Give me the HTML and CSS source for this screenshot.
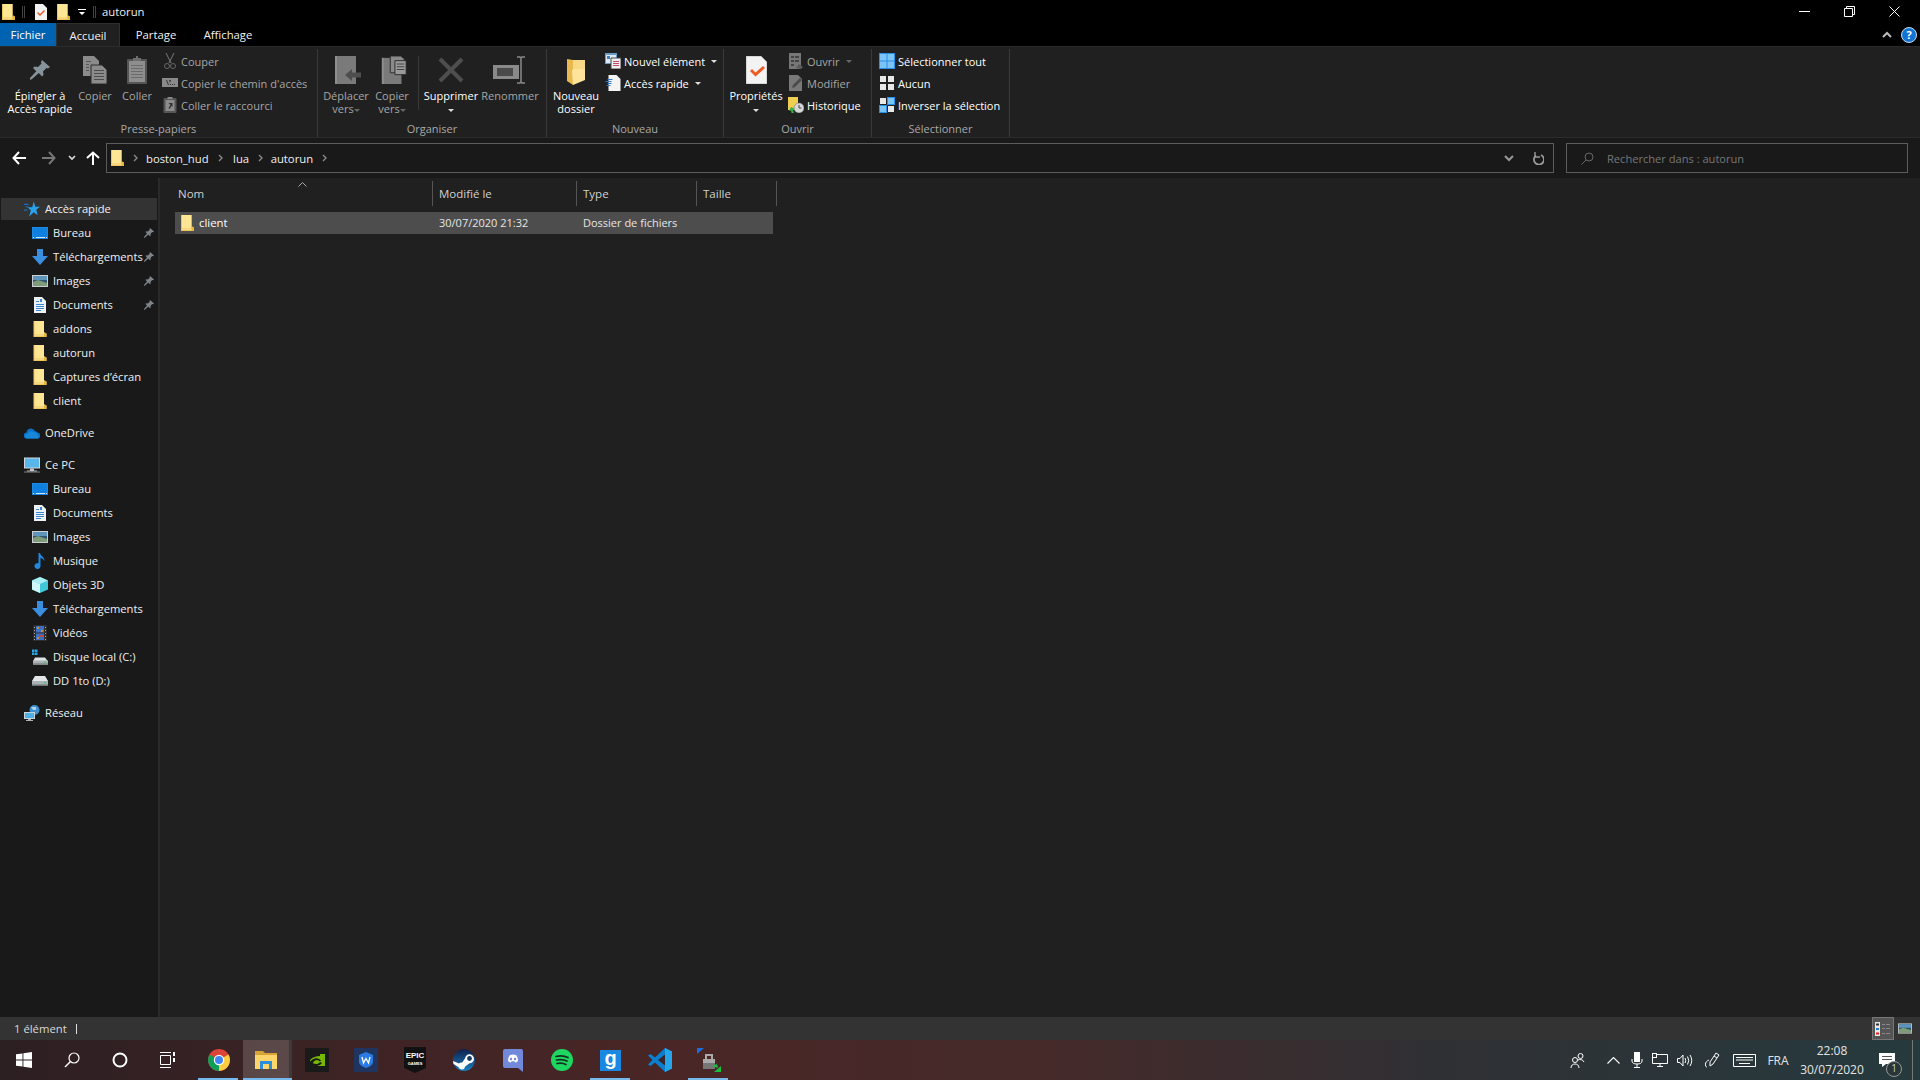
FILE: index.html
```html
<!DOCTYPE html>
<html lang="fr">
<head>
<meta charset="utf-8">
<title>autorun</title>
<link rel="stylesheet" href="styles.css">
</head>
<body>
<svg class="defs" width="0" height="0">
  <defs>
    <symbol id="folder" viewBox="0 0 13 16">
      <path d="M0 0h10.5v12.5H13V16H0z" fill="#eec55a"/>
      <path d="M1 0h9.5v13.5H1z" fill="#ffe695"/>
      <path d="M10.5 11l2.500 1.500V16h-2.500z" fill="#e5b640"/>
      <path d="M1 14.500h9.500V15H1z" fill="#ffefb8"/>
    </symbol>
    <symbol id="pin" viewBox="0 0 20 20">
      <path d="M12 0l8 7-2 1.500-1.500-.5-3.500 3.500.5 3.500-1.500 1.500-3.200-3.500L2 19l-2 1 0-2 6.300-6.800L3 8l1.500-1.500 3.500.5 3.500-3.500-.5-1.500z" fill="#87939b"/>
    </symbol>
    <symbol id="spin" viewBox="0 0 10 10">
      <path d="M6 0l4 3.500-1 .7-.7-.2-1.800 1.800.2 1.700-.7.8L4.400 6.500 1 9.600 0 10V9l3.100-3.400L1.500 4l.7-.7 1.700.2L5.700 1.700 5.500 1z" fill="#7f868b"/>
    </symbol>
    <symbol id="desktop" viewBox="0 0 16 12">
      <path d="M0 0h16v12H0z" fill="#1a8ae6"/>
      <path d="M1 1h14v9H1z" fill="#0f7fe0"/>
      <path d="M1 10h1v1H1zM4 10h9v1H4zM14 10h1v1h-1z" fill="#cfe6fb"/>
    </symbol>
    <symbol id="download" viewBox="0 0 16 16">
      <path d="M5 0h6v7h5l-8 9-8-9h5z" fill="#3a8ee0"/>
    </symbol>
    <symbol id="images" viewBox="0 0 16 12">
      <path d="M0 0h16v12H0z" fill="#c9ced2"/>
      <path d="M1 1h14v10H1z" fill="#31566f"/>
      <path d="M1 1h14v4H1z" fill="#5d95bd"/>
      <path d="M1 7l5-2 9 3v3H1z" fill="#7e9c78"/>
    </symbol>
    <symbol id="doc" viewBox="0 0 12 16">
      <path d="M0 0h8l4 4v12H0z" fill="#eef2f6"/>
      <path d="M2 4h3v1H2zM6 2h2v3H6zM2 7h8v1H2zM2 9h8v1H2zM2 11h8v1H2zM2 13h5v1H2z" fill="#3a86d0"/>
    </symbol>
    <symbol id="star" viewBox="0 0 14 13">
      <path d="M8.500 0l1.400 4.500H14l-3.300 2.700L12 12 8.500 9.300 4.500 13 6 7.500 3 5h4.200z" fill="#2aa3ee"/>
      <path d="M0 2h4v1H0zM1 4h3v1H1zM0 7h3v1H0z" fill="#1a6cc0"/>
    </symbol>
    <symbol id="onedrive" viewBox="0 0 16 11">
      <path d="M3 11a3 3 0 0 1-.5-6 4.500 4.500 0 0 1 8.500-1.500A3.500 3.500 0 0 1 13.500 5 3 3 0 0 1 13 11z" fill="#0a6fc4"/>
      <path d="M2.500 11a2.500 2.500 0 0 1 1-4.800 4 4 0 0 1 6.500-1.400 3 3 0 0 1 3.700 2.600 2 2 0 0 1 0 3.600z" fill="#1687d9"/>
    </symbol>
    <symbol id="pc" viewBox="0 0 16 15">
      <path d="M0 0h16v11H0z" fill="#d0d8de"/>
      <path d="M1 1h14v9H1z" fill="#58b7ea"/>
      <path d="M6 11h4v2H6zM3 13h10v1H3z" fill="#c0c6cb"/>
      <path d="M0 14h16v1H0z" fill="#7e858a"/>
    </symbol>
    <symbol id="music" viewBox="0 0 11 16">
      <path d="M4 0h1.500c.5 3 4.500 3.500 4.500 8-1-2-3-3-4-3v8a3 3 0 1 1-2-2.800z" fill="#2088e0"/>
    </symbol>
    <symbol id="cube" viewBox="0 0 16 16">
      <path d="M8 0l8 3.500v9L8 16 0 12.500v-9z" fill="#40c8d8"/>
      <path d="M8 0l8 3.500L8 7 0 3.500z" fill="#a8eef2"/>
      <path d="M0 3.500L8 7v9l-8-3.500z" fill="#d0f5f5"/>
    </symbol>
    <symbol id="video" viewBox="0 0 14 16">
      <path d="M0 0h14v16H0z" fill="#2d2d2d"/>
      <path d="M3 1h8v6.500H3z" fill="#3f6fc0"/>
      <path d="M3 8.500h8V15H3z" fill="#3f6fc0"/>
      <path d="M4 2h2v2H4zM8 5h2v2H8zM4 12h2v2H4z" fill="#c98a3d"/>
      <path d="M7 10h3v2H7z" fill="#b94a4a"/>
      <path d="M1 2h1v1H1zM1 5h1v1H1zM1 8h1v1H1zM1 11h1v1H1zM1 14h1v1H1zM12 2h1v1h-1zM12 5h1v1h-1zM12 8h1v1h-1zM12 11h1v1h-1zM12 14h1v1h-1z" fill="#aaa"/>
    </symbol>
    <symbol id="diskc" viewBox="0 0 16 15">
      <path d="M0 0h2.500v2.500H0zM3 0h2.500v2.500H3zM0 3h2.500v2.500H0zM3 3h2.500v2.500H3z" fill="#28a8ea"/>
      <path d="M3 8h10l3 4v3H1v-3z" fill="#dfe3e5"/>
      <path d="M1 11h15v4H1z" fill="#aab0b4"/>
      <path d="M1 14h15v1H1z" fill="#6c7276"/>
      <path d="M12 12h2v1.500h-2z" fill="#3cd070"/>
    </symbol>
    <symbol id="diskd" viewBox="0 0 16 10">
      <path d="M3 0h10l3 5v5H0V5z" fill="#e4e7e9"/>
      <path d="M0 5h16v5H0z" fill="#aab0b4"/>
      <path d="M0 8.500h16V10H0z" fill="#6c7276"/>
      <path d="M12 6h2v1.500h-2z" fill="#3cd070"/>
    </symbol>
    <symbol id="network" viewBox="0 0 16 16">
      <circle cx="10.500" cy="5" r="5" fill="#3d8fd0"/>
      <path d="M7 2h5v3H9z" fill="#a8d4ee"/>
      <path d="M0 7h11v7H0z" fill="#c9d3da"/>
      <path d="M1 8h9v5H1z" fill="#4fb0e6"/>
      <path d="M4 14h3v1h2v1H2v-1h2z" fill="#aab2b8"/>
    </symbol>

    <symbol id="copy-l" viewBox="0 0 24 28">
      <path d="M0 0h11l5 5v15H0z" fill="#8b8b8b"/>
      <path d="M8 9h11l5 5v14H8z" fill="#8b8b8b" stroke="#2d2d2d"/>
      <path d="M11 14h10v1H11zM11 17h10v1H11zM11 20h10v1H11zM11 23h10v1H11z" fill="#4c4c4c"/>
      <path d="M3 5h5v1H3zM3 8h3v1H3zM3 11h3v1H3zM3 14h3v1H3z" fill="#555"/>
    </symbol>
    <symbol id="paste-l" viewBox="0 0 20 28">
      <path d="M1 3h18q1 0 1 1v23q0 1-1 1H1q-1 0-1-1V4q0-1 1-1z" fill="#555"/>
      <path d="M6 2h3V0h2v2h3v3H6z" fill="#6e6e6e"/>
      <path d="M2 5h16v21H2z" fill="#8e8e8e"/>
      <path d="M4 9h12v1H4zM4 12h12v1H4zM4 15h12v1H4zM4 18h12v1H4zM4 21h12v1H4z" fill="#6b6b6b"/>
    </symbol>
    <symbol id="scissors" viewBox="0 0 12 16">
      <path d="M2 0l5 10M10 0L5 10" stroke="#777" fill="none"/>
      <circle cx="3" cy="13" r="2.500" stroke="#666" fill="none"/>
      <circle cx="9" cy="13" r="2.500" stroke="#666" fill="none"/>
    </symbol>
    <symbol id="pathi" viewBox="0 0 16 10">
      <path d="M0 0h16v9H0z" fill="#8a8a8a"/>
      <path d="M4 2l2 5h1L5 2zM8 6h1v1H8zM10 6h1v1h-1zM12 6h1v1h-1zM7 2l1 3 1-3z" fill="#333"/>
    </symbol>
    <symbol id="pastesm" viewBox="0 0 13 16">
      <path d="M1 1h11q1 0 1 1v13q0 1-1 1H1q-1 0-1-1V2q0-1 1-1z" fill="#555"/>
      <path d="M4 0h5v2H4z" fill="#888"/>
      <path d="M2 3h9v11H2z" fill="#8c8c8c"/>
      <path d="M5 6h4v4L8 9l-2 3-1-1 2-3z" fill="#333"/>
    </symbol>
    <symbol id="move-l" viewBox="0 0 26 28">
      <path d="M0 0h21v28H0z" fill="#7a7a7a"/>
      <path d="M0 0h2v28H0z" fill="#8e8e8e"/>
      <path d="M10 19l7-6v3.500h9v5h-9V25z" fill="#4e4e4e"/>
    </symbol>
    <symbol id="copyto-l" viewBox="0 0 26 30">
      <path d="M0 2h21v28H0z" fill="#7a7a7a"/>
      <path d="M0 2h2v28H0z" fill="#8e8e8e"/>
      <path d="M9 0h11l4 3v15H9z" fill="#8a8a8a" stroke="#2a2a2a"/>
      <path d="M14 5h12v15H14z" fill="#9a9a9a" stroke="#2a2a2a"/>
      <path d="M16 8h8v1h-8zM16 11h8v1h-8zM16 14h8v1h-8z" fill="#444"/>
    </symbol>
    <symbol id="x-l" viewBox="0 0 26 26">
      <path d="M2 2l22 22M24 2L2 24" stroke="#4e4e4e" stroke-width="4" fill="none"/>
    </symbol>
    <symbol id="rename-l" viewBox="0 0 34 28">
      <path d="M0 9h26v14H0z" fill="#8a8a8a"/>
      <path d="M4 12h16v8H4z" fill="#4a4a4a"/>
      <path d="M24 1h3l1 1 1-1h3M24 27h3l1-1 1 1h3M28 2v24" stroke="#8a8a8a" stroke-width="1.500" fill="none"/>
    </symbol>
    <symbol id="newfolder-l" viewBox="0 0 18 28">
      <path d="M0 1l6 1v25l-6-4z" fill="#e8b94f"/>
      <path d="M6 2h12v20H6z" fill="#f8d985"/>
      <path d="M6 27l-1-14q0-2 2-2h11v11z" fill="#ffe49a"/>
    </symbol>
    <symbol id="newitem" viewBox="0 0 16 16">
      <path d="M0 0h12v11H0z" fill="#6a9ec9"/>
      <path d="M1 2h10v8H1z" fill="#dfe9f2"/>
      <path d="M2 3h3v3H2z" fill="#3d7fc0"/>
      <path d="M6 5h10v11H6z" fill="#f0f0f0" stroke="#444"/>
      <path d="M8 8h6v1H8zM8 10h6v1H8zM8 12h6v1H8z" fill="#c04a6a"/>
    </symbol>
    <symbol id="quick" viewBox="0 0 15 16">
      <path d="M3 0h8l4 4v12H3z" fill="#f4f4f4"/>
      <path d="M2 4h5v1H2zM0 6h6v1H0zM2 8h4v1H2zM1 10h4v1H1z" fill="#2a7ad0"/>
    </symbol>
    <symbol id="props-l" viewBox="0 0 21 28">
      <path d="M0 0h15l6 6v22H0z" fill="#f3f3f3" stroke="#999" stroke-width=".6"/>
      <path d="M4 15l2-2 3.500 3.500L17 10l2 2-9.500 8.500z" fill="#ee5a24"/>
    </symbol>
    <symbol id="props-s" viewBox="0 0 12 16">
      <path d="M0 0h8l4 4v12H0z" fill="#f2f2f2"/>
      <path d="M2 9l1-1 2 2 4-4 1 1-5 5z" fill="#e8582a"/>
    </symbol>
    <symbol id="open-s" viewBox="0 0 14 16">
      <path d="M0 0h12v16H0z" fill="#777"/>
      <path d="M2 3h3v2H2zM6 3h4v2H6zM2 7h3v2H2zM6 7h4v2H6zM2 11h3v2H2z" fill="#444"/>
      <path d="M7 15l3-4 4 3-2 2z" fill="#5a5a5a"/>
    </symbol>
    <symbol id="edit-s" viewBox="0 0 14 16">
      <path d="M0 0h9l4 4v12H0z" fill="#787878"/>
      <path d="M3 13l1-3 7-7 2 2-7 7z" fill="#4a4a4a"/>
    </symbol>
    <symbol id="history" viewBox="0 0 16 16">
      <path d="M0 0h10v13H0z" fill="#eecf4f"/>
      <circle cx="11" cy="11" r="5" fill="#d8d8d8" stroke="#777" stroke-width=".6"/>
      <path d="M11 8v3h2.500" stroke="#444" fill="none"/>
      <path d="M3 10l4 2-2 1 1 3H3.500L3 13.500 1 14z" fill="#30b04a"/>
    </symbol>
    <symbol id="sel-all" viewBox="0 0 16 16">
      <path d="M0 0h16v16H0z" fill="#2a8fe6"/>
      <path d="M1 1h6.500v6.500H1zM8.500 1H15v6.500H8.500zM1 8.500h6.500V15H1zM8.500 8.500H15V15H8.500z" fill="#7cc3f6"/>
    </symbol>
    <symbol id="sel-none" viewBox="0 0 16 16">
      <path d="M1 1h6v6H1zM9 1h6v6H9zM1 9h6v6H1zM9 9h6v6H9z" fill="#e8e8e8"/>
    </symbol>
    <symbol id="sel-inv" viewBox="0 0 16 16">
      <path d="M8 0h8v8H8zM0 8h8v8H0z" fill="#2a8fe6"/>
      <path d="M9 1h6v6H9zM1 9h6v6H1z" fill="#7cc3f6"/>
      <path d="M1 1h6v6H1zM9 9h6v6H9z" fill="#e8e8e8"/>
    </symbol>
  </defs>
</svg>

<div class="window">
  <header class="titlebar">
    <svg class="ic-folder t-first"><use href="#folder"/></svg>
    <span class="t-sep t-sep-a"></span>
    <svg class="ic-tdoc"><use href="#props-s"/></svg>
    <svg class="ic-folder t-second"><use href="#folder"/></svg>
    <svg class="ic-tdrop" viewBox="0 0 8 8"><path d="M0 1h8v1H0zM1 4h6L4 7z" fill="#fff"/></svg>
    <span class="t-sep t-sep-b"></span>
    <span class="t-title">autorun</span>
    <div class="winbtns">
      <span class="winbtn"><svg width="11" height="11" viewBox="0 0 11 11"><path d="M0 5.500h11" stroke="#fff"/></svg></span>
      <span class="winbtn"><svg width="11" height="11" viewBox="0 0 11 11"><path d="M.5 2.500h8v8h-8zM2.500 2.500v-2h8v8h-2" fill="none" stroke="#fff"/></svg></span>
      <span class="winbtn"><svg width="11" height="11" viewBox="0 0 11 11"><path d="M.5.500l10 10M10.500.500l-10 10" stroke="#fff"/></svg></span>
    </div>
  </header>

  <nav class="tabs">
    <span class="tab tab-file">Fichier</span>
    <span class="tab tab-home">Accueil</span>
    <span class="tab tab-share">Partage</span>
    <span class="tab tab-view">Affichage</span>
    <svg class="ic-collapse" width="10" height="7" viewBox="0 0 10 7"><path d="M1 6l4-4 4 4" fill="none" stroke="#bbb" stroke-width="2"/></svg>
    <span class="help">?</span>
  </nav>

  <section class="ribbon">
    <div class="group g1">
      <div class="group-body">
        <div class="big w64"><svg class="big-ic pin-big"><use href="#pin"/></svg><span class="big-txt">Épingler à<br>Accès rapide</span></div>
        <div class="big w46 off"><svg class="big-ic ic24"><use href="#copy-l"/></svg><span class="big-txt">Copier</span></div>
        <div class="big w38 off"><svg class="big-ic ic20"><use href="#paste-l"/></svg><span class="big-txt">Coller</span></div>
        <div class="smalls ml6">
          <div class="small off"><svg class="sm-ic"><use href="#scissors"/></svg>Couper</div>
          <div class="small off"><svg class="sm-ic"><use href="#pathi"/></svg>Copier le chemin d'accès</div>
          <div class="small off"><svg class="sm-ic"><use href="#pastesm"/></svg>Coller le raccourci</div>
        </div>
      </div>
      <div class="group-label">Presse-papiers</div>
    </div>

    <div class="group g2">
      <div class="group-body">
        <div class="big w44 off"><svg class="big-ic ic26 nudge"><use href="#move-l"/></svg><span class="big-txt">Déplacer<br>vers<i class="caret dim"></i></span></div>
        <div class="big w48 off"><svg class="big-ic ic26 nudge"><use href="#copyto-l"/></svg><span class="big-txt">Copier<br>vers<i class="caret dim"></i></span></div>
        <span class="vsep"></span>
        <div class="big w64"><svg class="big-ic ic26"><use href="#x-l"/></svg><span class="big-txt">Supprimer<br><i class="caret"></i></span></div>
        <div class="big w54 off"><svg class="big-ic ic34"><use href="#rename-l"/></svg><span class="big-txt">Renommer</span></div>
      </div>
      <div class="group-label">Organiser</div>
    </div>

    <div class="group g3">
      <div class="group-body">
        <div class="big w58"><svg class="big-ic ic18"><use href="#newfolder-l"/></svg><span class="big-txt">Nouveau<br>dossier</span></div>
        <div class="smalls">
          <div class="small"><svg class="sm-ic"><use href="#newitem"/></svg>Nouvel élément<i class="caret"></i></div>
          <div class="small"><svg class="sm-ic"><use href="#quick"/></svg>Accès rapide<i class="caret"></i></div>
        </div>
      </div>
      <div class="group-label">Nouveau</div>
    </div>

    <div class="group g4">
      <div class="group-body">
        <div class="big w64"><svg class="big-ic ic21"><use href="#props-l"/></svg><span class="big-txt">Propriétés<br><i class="caret"></i></span></div>
        <div class="smalls">
          <div class="small off"><svg class="sm-ic"><use href="#open-s"/></svg>Ouvrir<i class="caret dim"></i></div>
          <div class="small off"><svg class="sm-ic"><use href="#edit-s"/></svg>Modifier</div>
          <div class="small"><svg class="sm-ic"><use href="#history"/></svg>Historique</div>
        </div>
      </div>
      <div class="group-label">Ouvrir</div>
    </div>

    <div class="group g5">
      <div class="group-body">
        <div class="smalls">
          <div class="small"><svg class="sm-ic"><use href="#sel-all"/></svg>Sélectionner tout</div>
          <div class="small"><svg class="sm-ic"><use href="#sel-none"/></svg>Aucun</div>
          <div class="small"><svg class="sm-ic"><use href="#sel-inv"/></svg>Inverser la sélection</div>
        </div>
      </div>
      <div class="group-label">Sélectionner</div>
    </div>
  </section>

  <section class="addressrow">
    <div class="navbtns">
      <svg class="nav-back" width="14" height="14" viewBox="0 0 14 14"><path d="M7 1L1.500 7 7 13M2 7h12" fill="none" stroke="#fff" stroke-width="2"/></svg>
      <svg class="nav-fwd" width="14" height="14" viewBox="0 0 14 14"><path d="M7 1l5.500 6L7 13M12 7H0" fill="none" stroke="#777" stroke-width="2"/></svg>
      <svg class="nav-drop" width="8" height="6" viewBox="0 0 8 6"><path d="M1 1l3 3 3-3" fill="none" stroke="#ddd" stroke-width="1.600"/></svg>
      <svg class="nav-up" width="14" height="14" viewBox="0 0 14 14"><path d="M1 7l6-5.500L13 7M7 2v12" fill="none" stroke="#fff" stroke-width="2"/></svg>
    </div>
    <div class="addressbox">
      <svg class="ic-folder addr-folder"><use href="#folder"/></svg>
      <svg class="chev chev-first" width="5" height="8" viewBox="0 0 5 8"><path d="M1 1l3 3-3 3" fill="none" stroke="#888" stroke-width="1.400"/></svg>
      <span class="crumb c1">boston_hud</span>
      <svg class="chev" width="5" height="8" viewBox="0 0 5 8"><path d="M1 1l3 3-3 3" fill="none" stroke="#888" stroke-width="1.400"/></svg>
      <span class="crumb c2">lua</span>
      <svg class="chev" width="5" height="8" viewBox="0 0 5 8"><path d="M1 1l3 3-3 3" fill="none" stroke="#888" stroke-width="1.400"/></svg>
      <span class="crumb c3">autorun</span>
      <svg class="chev" width="5" height="8" viewBox="0 0 5 8"><path d="M1 1l3 3-3 3" fill="none" stroke="#888" stroke-width="1.400"/></svg>
      <svg class="addr-drop" width="10" height="7" viewBox="0 0 10 7"><path d="M1 1l4 4 4-4" fill="none" stroke="#999" stroke-width="2"/></svg>
      <svg class="addr-refresh" width="12" height="13" viewBox="0 0 12 13"><path d="M4 3.500a5 5 0 1 0 5-.5" fill="none" stroke="#999" stroke-width="1.800"/><path d="M3 0v5h5" fill="none" stroke="#999" stroke-width="1.400"/></svg>
    </div>
    <div class="searchbox">
      <svg class="search-ic" width="13" height="13" viewBox="0 0 13 13"><circle cx="8" cy="5" r="4" fill="none" stroke="#666"/><path d="M5 8l-4.500 4.500" stroke="#666"/></svg>
      <span class="search-txt">Rechercher dans : autorun</span>
    </div>
  </section>

  <main class="content">
    <aside class="sidebar">
      <div class="navgroup">
        <div class="nav l1 active"><svg class="n-ic"><use href="#star"/></svg><span>Accès rapide</span></div>
        <div class="nav l2"><svg class="n-ic"><use href="#desktop"/></svg><span>Bureau</span><svg class="n-pin"><use href="#spin"/></svg></div>
        <div class="nav l2"><svg class="n-ic"><use href="#download"/></svg><span>Téléchargements</span><svg class="n-pin"><use href="#spin"/></svg></div>
        <div class="nav l2"><svg class="n-ic"><use href="#images"/></svg><span>Images</span><svg class="n-pin"><use href="#spin"/></svg></div>
        <div class="nav l2"><svg class="n-ic"><use href="#doc"/></svg><span>Documents</span><svg class="n-pin"><use href="#spin"/></svg></div>
        <div class="nav l2"><svg class="n-ic"><use href="#folder"/></svg><span>addons</span></div>
        <div class="nav l2"><svg class="n-ic"><use href="#folder"/></svg><span>autorun</span></div>
        <div class="nav l2"><svg class="n-ic"><use href="#folder"/></svg><span>Captures d’écran</span></div>
        <div class="nav l2"><svg class="n-ic"><use href="#folder"/></svg><span>client</span></div>
      </div>
      <div class="navgroup">
        <div class="nav l1"><svg class="n-ic"><use href="#onedrive"/></svg><span>OneDrive</span></div>
      </div>
      <div class="navgroup">
        <div class="nav l1"><svg class="n-ic"><use href="#pc"/></svg><span>Ce PC</span></div>
        <div class="nav l2"><svg class="n-ic"><use href="#desktop"/></svg><span>Bureau</span></div>
        <div class="nav l2"><svg class="n-ic"><use href="#doc"/></svg><span>Documents</span></div>
        <div class="nav l2"><svg class="n-ic"><use href="#images"/></svg><span>Images</span></div>
        <div class="nav l2"><svg class="n-ic"><use href="#music"/></svg><span>Musique</span></div>
        <div class="nav l2"><svg class="n-ic"><use href="#cube"/></svg><span>Objets 3D</span></div>
        <div class="nav l2"><svg class="n-ic"><use href="#download"/></svg><span>Téléchargements</span></div>
        <div class="nav l2"><svg class="n-ic"><use href="#video"/></svg><span>Vidéos</span></div>
        <div class="nav l2"><svg class="n-ic"><use href="#diskc"/></svg><span>Disque local (C:)</span></div>
        <div class="nav l2"><svg class="n-ic"><use href="#diskd"/></svg><span>DD 1to (D:)</span></div>
      </div>
      <div class="navgroup">
        <div class="nav l1"><svg class="n-ic"><use href="#network"/></svg><span>Réseau</span></div>
      </div>
    </aside>
    <div class="files">
      <div class="colhead">
        <div class="col c-name">Nom<svg class="sortcaret" width="9" height="5" viewBox="0 0 9 5"><path d="M.5 4.500l4-4 4 4" fill="none" stroke="#aaa"/></svg></div>
        <div class="col c-date">Modifié le</div>
        <div class="col c-type">Type</div>
        <div class="col c-size">Taille</div>
      </div>
      <div class="filerow">
        <div class="cell r-name"><svg class="ic-folder"><use href="#folder"/></svg><span class="lift">client</span></div>
        <div class="cell r-date"><span class="lift">30/07/2020 21:32</span></div>
        <div class="cell r-type"><span class="lift">Dossier de fichiers</span></div>
      </div>
    </div>
  </main>

  <footer class="statusbar">
    <span class="st-count">1 élément</span>
    <span class="st-bar"></span>
    <div class="st-views">
      <span class="st-view on"><svg width="16" height="14" viewBox="0 0 16 14"><path d="M0 0h5v14H0z" fill="#e8e8e8"/><path d="M1 1.500h3v2H1z" fill="#333"/><path d="M1 6h3v2H1z" fill="#2a7ad0"/><path d="M1 10.500h3v2H1z" fill="#d22"/><path d="M7 2h3v1H7zM11 2h4v1h-4zM7 6h3v1H7zM11 6h4v1h-4zM7 11h3v1H7zM11 11h4v1h-4z" fill="#888"/></svg></span>
      <span class="st-view"><svg width="14" height="11" viewBox="0 0 16 12"><use href="#images"/></svg></span>
    </div>
  </footer>
</div>

<div class="taskbar">
  <span class="tb tb48"><svg width="16" height="16" viewBox="0 0 16 16"><path d="M0 2.300l6.500-.9v6.200H0zM7.400 1.300L16 0v7.600H7.400zM0 8.400h6.500v6.200L0 13.700zM7.400 8.400H16V16l-8.600-1.200z" fill="#fff"/></svg></span>
  <span class="tb tb48"><svg width="16" height="16" viewBox="0 0 16 16"><circle cx="10" cy="6" r="5" fill="none" stroke="#fff" stroke-width="1.200"/><path d="M6.500 9.500L1 15" stroke="#fff" stroke-width="1.400"/></svg></span>
  <span class="tb tb48"><svg width="16" height="16" viewBox="0 0 16 16"><circle cx="8" cy="8" r="6.500" fill="none" stroke="#fff" stroke-width="2"/></svg></span>
  <span class="tb tb48"><svg width="16" height="16" viewBox="0 0 16 16"><path d="M.5 3.500h10v9H.5zM0 .5h11M0 15.500h11" fill="none" stroke="#fff"/><path d="M13 0h2v4h-2zM13 6h2v4h-2z" fill="#fff"/></svg></span>
  <span class="tb tb49 first-app open"><svg width="22" height="22" viewBox="0 0 22 22"><circle cx="11" cy="11" r="11" fill="#db4437"/><path d="M11 11L20.500 5.500A11 11 0 0 1 11 22z" fill="#ffcd40"/><path d="M11 11L11 22A11 11 0 0 1 1.500 5.500z" fill="#0f9d58"/><circle cx="11" cy="11" r="5.200" fill="#fff"/><circle cx="11" cy="11" r="4" fill="#4285f4"/></svg></span>
  <span class="tb tb49 active-app"><svg width="22" height="18" viewBox="0 0 22 18"><path d="M0 0h8l2 2h12v16H0z" fill="#d9a336"/><path d="M0 4h22v14H0z" fill="#ffd56b"/><path d="M5 10h12v8H5z" fill="#2a8fd8"/><path d="M8 13h6v5H8z" fill="#ffd56b"/></svg></span>
  <span class="tb tb49"><svg width="24" height="24" viewBox="0 0 24 24"><path d="M0 0h24v24H0z" fill="#1a1a1a"/><path d="M5 12c3-3 6-4 10-4V6h5v12h-8c2-.5 4-1.500 5-3l-2-1c-1 1.500-2.500 2-4 2-2 0-3-1-3-1s1-3 4-3c1 0 2 .5 3 1.500l1-1c-2-2-4-2.500-6-2-2 .5-4 2-5 3z" fill="#76b900"/></svg></span>
  <span class="tb tb49"><svg width="24" height="24" viewBox="0 0 24 24"><path d="M0 0h24v24H0z" fill="#1f3560"/><path d="M12 4l7 3v7c0 3-4 5-7 6-3-1-7-3-7-6V7z" fill="#2b7be4"/><path d="M8 9l1.500 6L12 10.500 14.500 15 16 9" fill="none" stroke="#fff" stroke-width="1.300"/></svg></span>
  <span class="tb tb49"><svg width="22" height="26" viewBox="0 0 22 26"><path d="M1 0h20q1 0 1 1v20l-11 5-11-5V1q0-1 1-1z" fill="#111"/><text x="11" y="11" class="epic1">EPIC</text><text x="11" y="18" class="epic2">GAMES</text></svg></span>
  <span class="tb tb49"><svg width="22" height="22" viewBox="0 0 22 22"><defs><linearGradient id="steamg" x1="0" y1="0" x2="0" y2="1"><stop offset="0" stop-color="#10204a"/><stop offset="1" stop-color="#1a7fc0"/></linearGradient></defs><circle cx="11" cy="11" r="11" fill="url(#steamg)"/><path d="M0 12l6 2.500a3.500 3.500 0 0 1 3-.8l3-4.200a4.500 4.500 0 1 1 4.500 4.800l-4.300 3.200a3.500 3.500 0 0 1-6.800.5L.5 15z" fill="#fff"/><circle cx="16.500" cy="9.500" r="2.400" fill="#17385e"/></svg></span>
  <span class="tb tb49"><svg width="20" height="23" viewBox="0 0 20 23"><path d="M2 0h16q2 0 2 2v21l-5-4H2q-2 0-2-2V2q0-2 2-2z" fill="#7289da"/><path d="M5 12c0-3 1-5 2-6 2-.7 4-.7 6 0 1 1 2 3 2 6-1 1-2 1.500-3 1.500l-.5-1.200h-3L8 13.500C7 13.500 6 13 5 12z" fill="#fff"/><circle cx="8" cy="10" r="1.200" fill="#7289da"/><circle cx="12" cy="10" r="1.200" fill="#7289da"/></svg></span>
  <span class="tb tb49"><svg width="22" height="22" viewBox="0 0 22 22"><circle cx="11" cy="11" r="11" fill="#1ed760"/><path d="M5 7.500c4-1 8-1 12 1M5.500 11c3.500-.8 7-.7 10.500 1M6 14.500c3-.7 6-.6 9 1" fill="none" stroke="#12301d" stroke-width="1.700" stroke-linecap="round"/></svg></span>
  <span class="tb tb49 open"><span class="gmod">g</span></span>
  <span class="tb tb49"><svg width="24" height="24" viewBox="0 0 24 24"><path d="M17 0l7 3.500v17L17 24 7 14.500 2.500 18 0 16.500 4.500 12 0 7.500 2.500 6 7 9.500z" fill="#0a7fd0"/><path d="M17 0l7 3.500v17L17 24z" fill="#25a5ee"/><path d="M17 6.500L10 12l7 5.500z" fill="#3a2526"/></svg></span>
  <span class="tb tb49 open"><svg width="24" height="24" viewBox="0 0 24 24"><path d="M0 0h7L0 6z" fill="#1a6fe0"/><path d="M8 6h8v5h-2V8h-4v3H8z" fill="#aaa"/><path d="M6 11h12v10H6z" fill="#777"/><path d="M6 11h12v4H6z" fill="#aaa"/><path d="M24 24h-7l7-6z" fill="#18c040"/><path d="M15 18l5-2 1 4z" fill="#18c040"/></svg></span>

  <div class="tray">
    <span class="tr w48"><svg width="15" height="15" viewBox="0 0 15 15"><circle cx="5" cy="7" r="2.500" fill="none" stroke="#fff"/><path d="M1 15c0-3 2-4 4-4s4 1 4 4" fill="none" stroke="#fff"/><circle cx="10.500" cy="3" r="2.500" fill="none" stroke="#fff"/><path d="M8 7c2-1 5-.5 6 2" fill="none" stroke="#fff"/></svg></span>
    <span class="tr w24"><svg width="13" height="7" viewBox="0 0 13 7"><path d="M.5 6.500l6-6 6 6" fill="none" stroke="#fff" stroke-width="1.100"/></svg></span>
    <span class="tr w23"><svg width="12" height="16" viewBox="0 0 12 16"><path d="M3 0h6v10H3z" fill="#fff"/><path d="M1 7v2q0 3 5 3t5-3V7M6 12v3M3 15.500h6" fill="none" stroke="#fff"/></svg></span>
    <span class="tr w24"><svg width="16" height="14" viewBox="0 0 16 14"><path d="M.5 1.500h11M3.500 1.500h12v9H.5V5M8 10.500v3M5 13.500h6" fill="none" stroke="#fff"/><path d="M0 0h5v5H0z" fill="#fff"/><path d="M1 1h3v3H1z" fill="#2a3a3d"/></svg></span>
    <span class="tr w25"><svg width="16" height="13" viewBox="0 0 16 13"><path d="M.5 4.500h2.500l3-3.500v11l-3-3.500H.5z" fill="none" stroke="#fff"/><path d="M8 4q1.500 2.500 0 5M10.500 2.500q2.500 4 0 8M13 1q3.500 5.500 0 11" fill="none" stroke="#fff"/></svg></span>
    <span class="tr w27"><svg class="pen-ic" width="16" height="16" viewBox="0 0 16 16"><path d="M5 10l6-9 3 2-6 9-3 2zM9 4l3 2" fill="none" stroke="#fff"/><path d="M4 8c-5 2-4 7-2 7" fill="none" stroke="#fff"/></svg></span>
    <span class="tr w40"><svg width="23" height="13" viewBox="0 0 23 13"><path d="M.5.500h22v12H.5z" fill="none" stroke="#fff"/><path d="M3 3h17v1H3zM3 5.500h17v1H3zM6 9h11v1H6z" fill="#fff"/></svg></span>
    <span class="tr w28 tray-text">FRA</span>
    <span class="tr w80 tray-clock"><span>22:08</span><span>30/07/2020</span></span>
    <span class="tr w40 notif">
      <svg class="notif-ic" width="16" height="14" viewBox="0 0 16 14"><path d="M0 0h16v11H7l-4 3v-3H0z" fill="#fff"/><path d="M3 3h10v1H3zM3 6h10v1H3z" fill="#555"/></svg>
      <span class="badge">1</span>
    </span>
    <span class="showdesk"></span>
  </div>
</div>
</body>
</html>
```

FILE: styles.css
```css
* { box-sizing: border-box; }
html, body { margin: 0; padding: 0; width: 1920px; height: 1080px; overflow: hidden; background: #000; }
body { font: 11px/13px "Open Sans", "Noto Sans", sans-serif; color: #fff; display: flex; flex-direction: column; }
.defs { position: absolute; }
svg { display: block; flex: none; }
.window { height: 1040px; display: flex; flex-direction: column; }

/* title bar */
.titlebar { height: 23px; background: #000; display: flex; align-items: center; }
.ic-folder { width: 13px; height: 16px; }
.t-first { margin-left: 2px; }
.t-sep { width: 3px; height: 12px; border: 1px solid #444; border-width: 0 1px; }
.t-sep-a { margin-left: 7px; }
.ic-tdoc { width: 12px; height: 16px; margin-left: 10px; }
.t-second { margin-left: 10px; }
.ic-tdrop { width: 8px; height: 8px; margin-left: 8px; }
.t-sep-b { margin-left: 7px; }
.t-title { margin-left: 6px; font-size: 11.300px; color: #eee; }
.winbtns { margin-left: auto; margin-right: 3px; display: flex; }
.winbtn { width: 45px; height: 20px; display: flex; align-items: center; justify-content: center; }

/* tabs */
.tabs { height: 23px; background: #000; display: flex; align-items: center; position: relative; font-size: 11.300px; }
.tab { height: 23px; display: flex; align-items: center; justify-content: center; color: #f0f0f0; }
.tab-file { width: 56px; background: #0063b1; color: #fff; }
.tab-home { width: 64px; background: #202020; border: 1px solid #2f2f2f; border-bottom: 0; }
.tab-share { margin-left: 15px; width: 42px; }
.tab-view { margin-left: 26px; width: 50px; }
.ic-collapse { margin-left: auto; margin-right: 9px; }
.help { width: 16px; height: 16px; margin-right: 3px; border-radius: 50%; background: #1173d4; border: 1px solid #cde; display: flex; align-items: center; justify-content: center; font-weight: 700; font-size: 11px; }

/* ribbon */
.ribbon { height: 92px; background: #202020; border-top: 1px solid #2b2b2b; border-bottom: 1px solid #2b2b2b; display: flex; padding-top: 2px; }
.group { display: flex; flex-direction: column; border-right: 1px solid #3a3a3a; height: 88px; }
.g1 { width: 318px; padding-left: 8px; }
.g2 { width: 229px; padding-left: 6px; }
.g3 { width: 177px; }
.g4 { width: 148px; }
.g5 { width: 138px; padding-left: 7px; }
.group-body { height: 72px; display: flex; }
.group-label { height: 16px; line-height: 16px; text-align: center; color: #a8a8a8; }
.g1 .group-label { margin-left: -8px; }
.g2 .group-label { margin-left: -6px; }
.g5 .group-label { margin-left: -7px; }
.big { display: flex; flex-direction: column; align-items: center; flex: none; }
.big-ic { height: 40px; }
.big-txt { text-align: center; white-space: nowrap; height: 26px; }
.off { color: #a6a6a6; }
.w38 { width: 38px; } .w44 { width: 44px; } .w46 { width: 46px; } .w48 { width: 48px; }
.w54 { width: 54px; } .w58 { width: 58px; } .w64 { width: 64px; }
.pin-big { width: 20px; height: 20px; margin: 11px 0 9px; }
.ic24 { width: 24px; height: 28px; margin: 7px 0 5px; }
.ic20 { width: 20px; height: 28px; margin: 7px 0 5px; }
.ic26 { width: 26px; height: 28px; margin: 7px 0 5px; }
.ic26.nudge { margin-left: 4px; }
.ic34 { width: 34px; height: 28px; margin: 7px 0 5px; }
.ic18 { width: 18px; height: 28px; margin: 9px 0 3px; }
.ic21 { width: 21px; height: 28px; margin: 7px 0 5px; }
.vsep { width: 1px; height: 54px; margin: 7px 0 0 2px; background: #3a3a3a; flex: none; }
.caret { display: inline-block; width: 0; height: 0; border: 3px solid transparent; border-top: 3px solid #ddd; border-bottom: 0; margin-left: 6px; vertical-align: middle; }
.big-txt br + .caret { margin-left: 0; }
.caret.dim { border-top-color: #666; }
.smalls { display: flex; flex-direction: column; flex: none; padding-top: 1px; }
.ml6 { margin-left: 6px; }
.small { height: 22px; display: flex; align-items: center; white-space: nowrap; gap: 3px; }
.small .caret { margin-left: 3px; }
.sm-ic { width: 16px; height: 16px; }

/* address */
.addressrow { height: 40px; background: #191919; display: flex; align-items: flex-start; padding-top: 5px; }
.navbtns { width: 100px; display: flex; align-items: center; height: 30px; padding-left: 12px; }
.nav-fwd { margin-left: 16px; }
.nav-drop { margin-left: 12px; }
.nav-up { margin-left: 10px; }
.addressbox { margin-left: 6px; width: 1448px; height: 30px; border: 1px solid #5c5c5c; background: #191919; display: flex; align-items: center; padding-left: 4px; font-size: 11.300px; }
.chev-first { margin-left: 9px; }
.crumb { color: #f0f0f0; }
.c1 { margin-left: 8px; }
.c2 { margin-left: 10.500px; }
.c3 { margin-left: 7.500px; }
.chev { margin-left: 9px; }
.addr-drop { margin-left: auto; margin-right: 18px; }
.addr-refresh { margin-right: 9px; }
.searchbox { margin-left: 12px; width: 342px; height: 30px; border: 1px solid #5c5c5c; background: #191919; display: flex; align-items: center; padding-left: 14px; color: #777; font-size: 11.100px; }
.search-txt { margin-left: 13px; }

/* content */
.content { flex: 1; display: flex; min-height: 0; }
.sidebar { width: 160px; background: #191919; border-right: 2px solid #2a2a2a; padding-top: 19px; font-size: 11.200px; }
.navgroup { margin-bottom: 8px; }
.nav { height: 24px; display: flex; align-items: center; color: #f0f0f0; white-space: nowrap; position: relative; }
.nav.l1 { padding-left: 24px; }
.nav.l2 { padding-left: 32px; }
.nav.active::before { content: ""; position: absolute; left: 1px; right: 1px; top: 1px; bottom: 1px; background: #333; }
.nav > * { position: relative; }
.nav > span { padding-bottom: 2px; }
.n-ic { width: 16px; height: 16px; margin-right: 5px; }
.nav > .n-pin { position: absolute; left: 144px; top: 7px; width: 10px; height: 10px; }
.files { flex: 1; background: #202020; padding-top: 3px; }
.colhead { display: flex; height: 25px; margin-left: 12px; color: #d0d0d0; font-size: 11.500px; }
.col { border-right: 1px solid #555; padding-left: 6px; display: flex; align-items: center; position: relative; }
.c-name { width: 261px; }
.c-date { width: 144px; }
.c-type { width: 120px; }
.c-size { width: 80px; }
.sortcaret { position: absolute; left: 126px; top: 1px; }
.filerow { display: flex; margin: 6px 0 0 15px; width: 598px; height: 22px; background: #4d4d4d; align-items: center; color: #e6e6e6; }
.cell { padding-left: 6px; white-space: nowrap; }
.lift { display: block; padding-bottom: 2px; }
.r-name { width: 258px; display: flex; align-items: center; gap: 5px; color: #fff; font-size: 11.350px; }
.r-date { width: 144px; }
.r-type { width: 150px; }

/* status */
.statusbar { height: 23px; background: #333; display: flex; align-items: center; padding-left: 14px; color: #d8d8d8; font-size: 11.300px; }
.st-bar { width: 1px; height: 10px; background: #ddd; margin-left: 9px; }
.st-views { margin-left: auto; display: flex; align-items: center; padding-right: 4px; }
.st-view { width: 22px; height: 23px; display: flex; align-items: center; justify-content: center; }
.st-view.on { background: #555; border: 1px solid #777; }

/* taskbar */
.taskbar { height: 40px; display: flex; align-items: center; background: linear-gradient(90deg, #2c1f22 0%, #3f2425 20%, #4a2626 35%, #452a2a 55%, #2f3034 75%, #263a3e 100%); }
.tb { height: 40px; display: flex; align-items: center; justify-content: center; flex: none; position: relative; }
.tb48 { width: 48px; }
.tb49 { width: 49px; }
.first-app { margin-left: 2px; }
.open::after { content: ""; position: absolute; left: 4px; right: 5px; bottom: 0; height: 2px; background: #76b9ed; }
.active-app { background: rgba(255,255,255,.17); border-right: 3px solid #3b3b3b; }
.active-app::after { content: ""; position: absolute; left: 0; right: -3px; bottom: 0; height: 2px; background: #76b9ed; }
.gmod { width: 21px; height: 21px; background: #1a87e0; display: flex; align-items: center; justify-content: center; font: 700 20px/1 "Liberation Sans", sans-serif; color: #fff; padding-bottom: 5px; }
.epic1 { font: 700 8px "Liberation Sans", sans-serif; fill: #fff; text-anchor: middle; }
.epic2 { font: 700 4px "Liberation Sans", sans-serif; fill: #fff; text-anchor: middle; }
.tray { margin-left: auto; display: flex; align-items: center; height: 40px; color: #e4e4e4; font-size: 12px; }
.tr { height: 40px; display: flex; align-items: center; justify-content: center; flex: none; }
.w23 { width: 23px; } .w24 { width: 24px; } .w25 { width: 25px; } .w27 { width: 27px; } .w28 { width: 28px; } .w40 { width: 40px; } .w80 { width: 80px; }
.pen-ic { margin-left: 5px; }
.tray-clock { flex-direction: column; line-height: 19px; }
.notif { position: relative; }
.notif-ic { margin-right: 10px; }
.badge { position: absolute; left: 14px; top: 21px; width: 16px; height: 16px; border-radius: 50%; border: 1.500px solid #999; background: #2a3538; color: #ccc; font-size: 10px; line-height: 13px; text-align: center; }
.showdesk { width: 8px; height: 40px; border-left: 1px solid #777; }
.tray .w48 { width: 48px; }
```
